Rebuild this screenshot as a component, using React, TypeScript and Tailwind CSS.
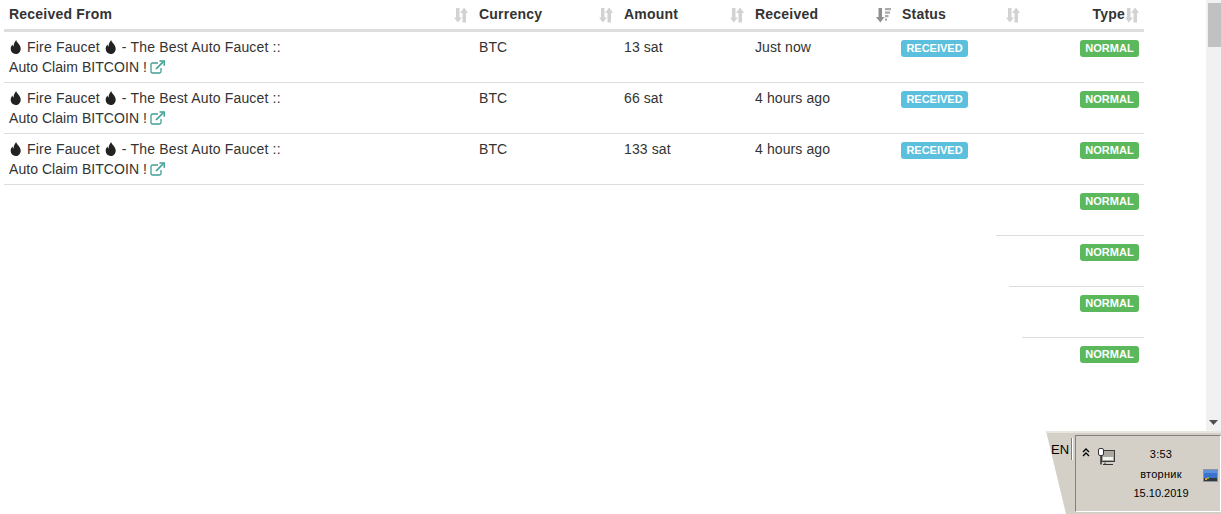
import React from "react";

const font = "[font-family:'Liberation_Sans',Arial,sans-serif]";

function Sort({ active = false }: { active?: boolean }) {
  if (active) {
    return (
      <svg width="15" height="16" viewBox="0 0 15 16" className="block">
        <path d="M2.500 1h3.500v9h2.500L4.300 15.500 0 10h2.500z" fill="#8f8f8f" />
        <path d="M9 1h6v2.300H9zM9 4.500h5v2.300H9zM9 8h3.500v2.300H9zM9 11.500h2v2.300H9z" fill="#ababab" />
      </svg>
    );
  }
  return (
    <svg width="14" height="16" viewBox="0 0 14 16" className="block">
      <path d="M2 1h3.500v9.500H8l-4.200 5-3.800-5h2z" fill="#d2d2d2" />
      <path d="M8.500 15.500H12V6h2L10.200.5 6 6h2.500z" fill="#d2d2d2" />
    </svg>
  );
}

function Flame() {
  return (
    <svg width="13" height="14" viewBox="0 0 13 14" className="mr-[1px] inline-block align-[-2px]">
      <path d="M7.200 0c.2 2.400 4.500 4.700 4.500 8.700 0 3-2.200 5.300-5 5.300s-5-2.200-5-5.200c0-2 1-3.400 1.900-4.200 0 1 .4 1.700 1 2C4.500 4 5.700 1.800 7.200 0z" fill="#222" />
    </svg>
  );
}

function External() {
  return (
    <svg width="15" height="14" viewBox="0 0 15 14" className="ml-[-1px] inline-block align-[-2px]" fill="none" stroke="#3f9f92" strokeWidth="1.300">
      <path d="M11 8v3.500a1.500 1.500 0 0 1-1.500 1.500h-7A1.500 1.500 0 0 1 1 11.500v-7A1.500 1.500 0 0 1 2.500 3H8" />
      <path d="M6 9l7-7" strokeWidth="1.700" />
      <path d="M9.500 1h4.700v4.700" strokeWidth="1.500" />
    </svg>
  );
}

function Head({ label, w, active = false }: { label: string; w: string; active?: boolean }) {
  return (
    <div className={`${w} flex h-[29px] shrink-0 items-center justify-between pl-[5px] pr-[6px]`}>
      <span className="text-[14px] font-bold tracking-[0.22px] text-[#333]">{label}</span>
      <Sort active={active} />
    </div>
  );
}

function NormalBadge() {
  return (
    <span className="flex h-[17px] w-[59px] items-center justify-center rounded-[3px] bg-[#5cb85c] text-[11px] font-bold leading-[13px] tracking-normal text-white">
      NORMAL
    </span>
  );
}

function DataRow({ amount, time }: { amount: string; time: string }) {
  return (
    <div className="flex h-[51px] border-b border-[#ddd] text-[14px] leading-5 tracking-[0.1px] text-[#333]">
      <div className="w-[470px] shrink-0 pl-[5px] pt-[5px]">
        <div className="tracking-[0.17px]">
          <Flame /> Fire Faucet <Flame /> - The Best Auto Faucet ::
        </div>
        <div className="tracking-[0.05px]">
          Auto Claim BITCOIN ! <External />
        </div>
      </div>
      <div className="w-[145px] shrink-0 pl-[5px] pt-[5px]">BTC</div>
      <div className="w-[131px] shrink-0 pl-[5px] pt-[5px]">{amount}</div>
      <div className="w-[147px] shrink-0 pl-[5px] pt-[5px]">{time}</div>
      <div className="shrink-0 pl-[4px] pt-[8px]">
        <span className="flex h-[17px] w-[67px] items-center justify-center rounded-[3px] bg-[#5bc0de] text-[11px] font-bold leading-[13px] tracking-normal text-white">
          RECEIVED
        </span>
      </div>
      <div className="ml-auto pr-[5px] pt-[8px]">
        <NormalBadge />
      </div>
    </div>
  );
}

function TrailRow({ w }: { w?: string }) {
  return (
    <div className={`ml-auto flex h-[51px] justify-end pr-[5px] pt-[8px] ${w ?? ""}`}>
      <NormalBadge />
    </div>
  );
}

export default function App() {
  return (
    <div className={`relative flex h-[514px] w-[1221px] overflow-hidden bg-white ${font}`}>
      <main className="w-[1206px] shrink-0 pl-1">
        <div className="w-[1140px]">
          <div className="flex border-b-[3px] border-[#ddd]">
            <Head label="Received From" w="w-[470px]" />
            <Head label="Currency" w="w-[145px]" />
            <Head label="Amount" w="w-[131px]" />
            <Head label="Received" w="w-[147px]" active />
            <Head label="Status" w="w-[129px]" />
            <div className="flex h-[29px] flex-1 items-center justify-end pr-[5px]">
              <span className="text-[14px] font-bold tracking-[0.22px] text-[#333]">Type</span>
              <Sort />
            </div>
          </div>
          <DataRow amount="13 sat" time="Just now" />
          <DataRow amount="66 sat" time="4 hours ago" />
          <DataRow amount="133 sat" time="4 hours ago" />
          <TrailRow w="w-[148px] border-b border-[#ddd]" />
          <TrailRow w="w-[135px] border-b border-[#ddd]" />
          <TrailRow w="w-[122px] border-b border-[#ddd]" />
          <TrailRow />
        </div>
      </main>
      <aside className="flex h-[431px] w-[15px] flex-col items-end justify-between bg-[#f1f1f1]">
        <div className="mt-[3px] h-[44px] w-[13px] bg-[#c1c1c1]" />
        <svg width="9" height="5" viewBox="0 0 9 5" className="mb-[6px] mr-[3px]">
          <path d="M0 0h9L4.500 5z" fill="#505050" />
        </svg>
      </aside>

      <div className="absolute left-[1046px] top-[431px] h-[83px] w-[175px] bg-[#d4d0c8] [clip-path:polygon(0_0,100%_0,100%_100%,20px_100%)] text-[11px] text-black">
        <div className="h-[2px] bg-[#e9e6e0]" />
        <span className="absolute left-[5px] top-[12px] text-[13px] leading-[14px]">EN</span>
        <div className="absolute left-[25px] top-[7px] h-[22px] w-[2px] border-l border-r border-l-[#808080] border-r-white" />
        <div className="absolute bottom-[2px] left-[29px] right-0 top-[4px] flex border border-b-white border-l-[#808080] border-r-white border-t-[#808080]">
          <svg width="8" height="9" viewBox="0 0 8 9" className="ml-[6px] mt-[12px]" fill="none" stroke="#000" strokeWidth="1.300">
            <path d="M1 4l3-3 3 3M1 8l3-3 3 3" />
          </svg>
          <svg width="17" height="18" viewBox="0 0 17 18" className="ml-[8px] mt-[12px]">
            <rect x="3.500" y="2.500" width="13" height="11" fill="#a9a9a2" stroke="#3a3a3a" />
            <rect x="5" y="9" width="10" height="3" fill="#f4f4ef" />
            <path d="M7 14.500v2M5 16.500h10" stroke="#333" />
            <rect x="0.500" y="0.500" width="5" height="7" rx="1.500" fill="#fff" stroke="#333" />
            <path d="M3 7.500v9" stroke="#333" strokeWidth="1.500" />
          </svg>
          <div className="ml-[6px] flex w-[80px] flex-col items-center pt-[9px] leading-[19.500px] tracking-[0.25px]">
            <span>3:53</span>
            <span>вторник</span>
            <span className="tracking-normal">15.10.2019</span>
          </div>
          <svg width="15" height="13" viewBox="0 0 15 13" className="ml-[2px] mt-[33px]">
            <rect width="15" height="13" fill="#8d95a0" />
            <rect x="1" y="1" width="13" height="8" fill="#3a72cc" />
            <rect x="1" y="1" width="13" height="3" fill="#5c8fdc" />
            <rect x="1" y="9" width="13" height="3" fill="#34373c" />
            <rect x="2" y="9" width="2" height="2" fill="#e0a030" />
            <rect x="4" y="8" width="2" height="2" fill="#6fb04a" />
          </svg>
        </div>
      </div>
    </div>
  );
}
